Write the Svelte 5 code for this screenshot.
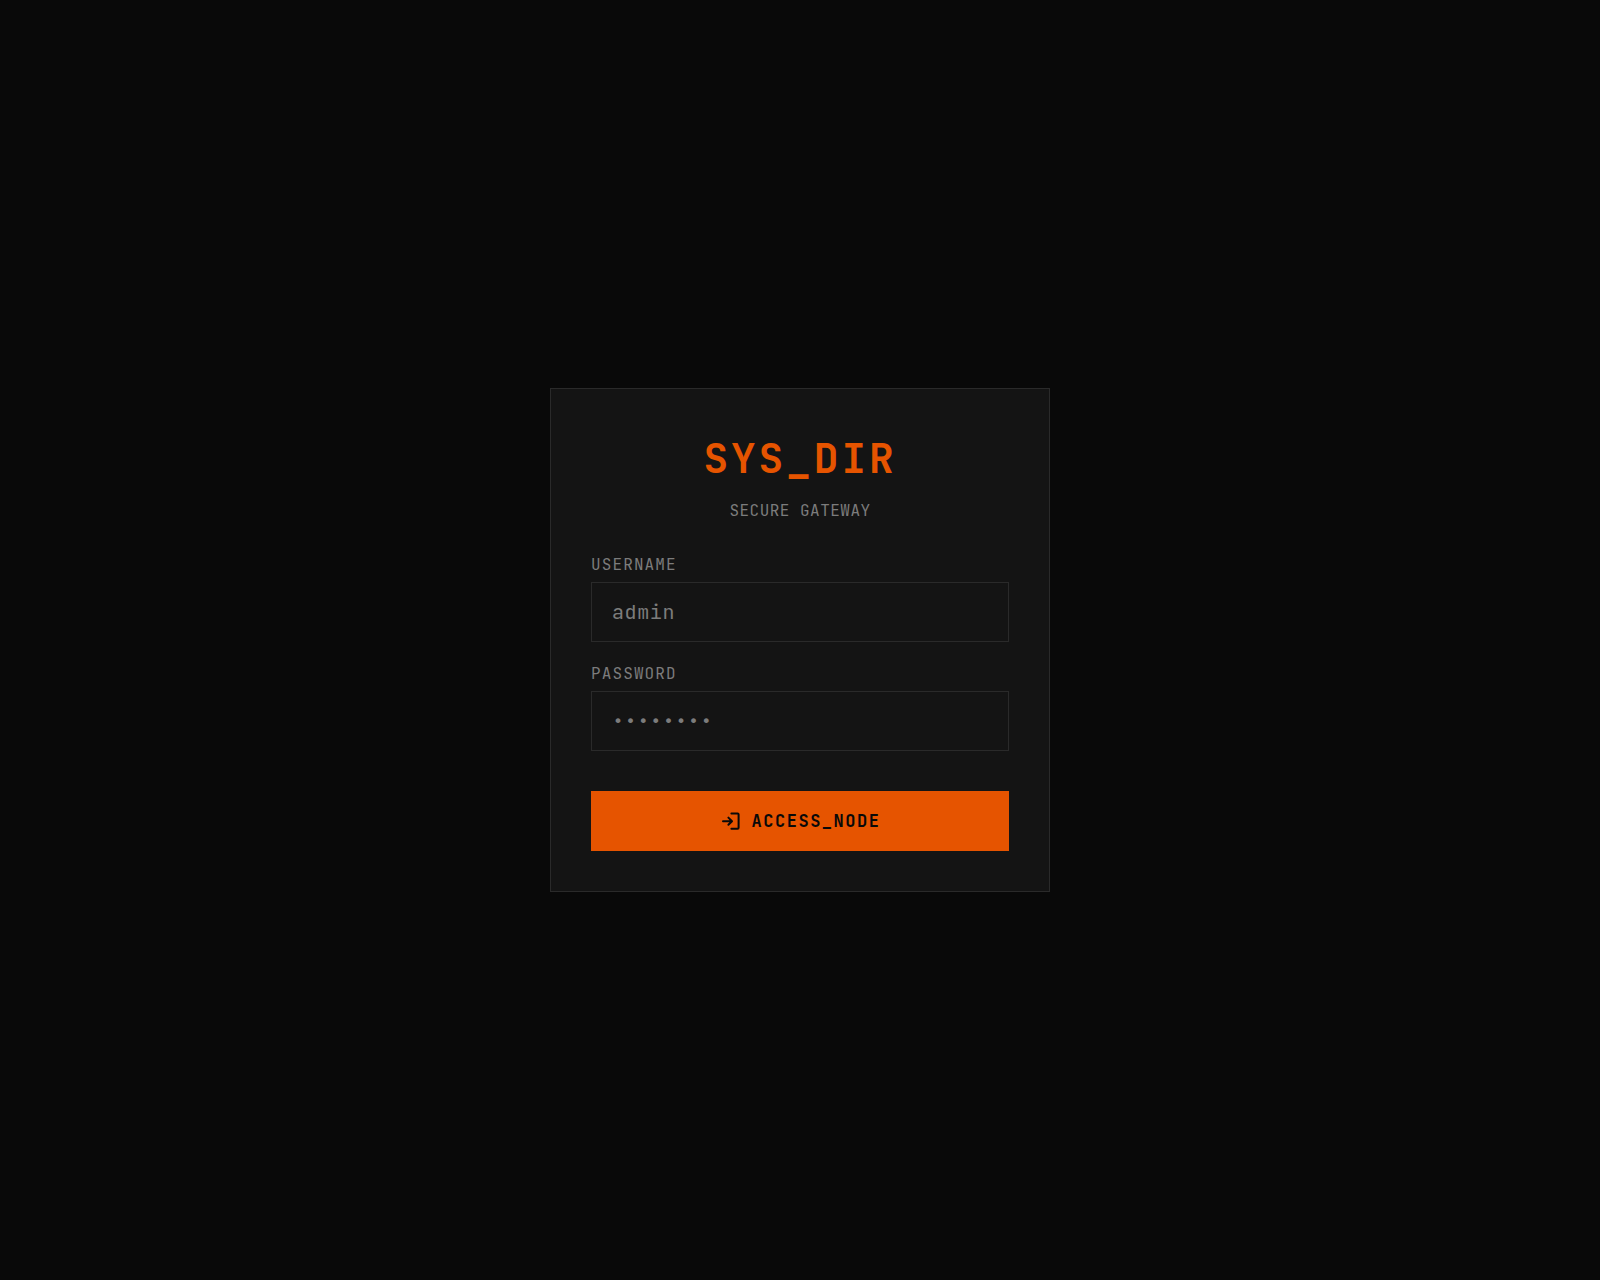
<script lang="ts">
  let username = $state('');
  let password = $state('');

  function handleSubmit(event: SubmitEvent) {
    event.preventDefault();
  }
</script>

<svelte:head>
  <title>SYS_DIR</title>
</svelte:head>

<main class="login-page">
  <section class="login-card">
    <header class="login-header">
      <h1 class="title">SYS_DIR</h1>
      <p class="subtitle">SECURE GATEWAY</p>
    </header>

    <form class="login-form" onsubmit={handleSubmit}>
      <div class="field">
        <label for="username">USERNAME</label>
        <input id="username" type="text" placeholder="admin" autocomplete="username" bind:value={username} />
      </div>

      <div class="field">
        <label for="password">PASSWORD</label>
        <input
          id="password"
          type="password"
          placeholder="••••••••"
          autocomplete="current-password"
          bind:value={password}
        />
      </div>

      <button type="submit" class="submit">
        <svg class="icon" viewBox="0 0 22 22" aria-hidden="true">
          <path d="M12.4 3.6h6.2a1 1 0 0 1 1 1v13.2a1 1 0 0 1-1 1h-6.2M4 11.2h8.6M9.4 7.6l3.6 3.6-3.6 3.6" />
        </svg>
        <span>ACCESS_NODE</span>
      </button>
    </form>
  </section>
</main>

<style>
  :global(body) {
    margin: 0;
    background: #090909;
  }

  .login-page {
    min-height: 100vh;
    display: flex;
    align-items: center;
    justify-content: center;
    font-family: 'JetBrains Mono', 'DejaVu Sans Mono', monospace;
    color: #7c7c7c;
  }

  .login-card {
    box-sizing: border-box;
    width: 100%;
    max-width: 500px;
    padding: 40px;
    background: #141414;
    border: 1px solid #2a2a2a;
  }

  .login-header {
    margin-bottom: 30px;
    text-align: center;
  }

  .title {
    margin: 0 0 12px;
    font-size: 41px;
    line-height: 58px;
    font-weight: 700;
    letter-spacing: 3px;
    color: #e65400;
  }

  .subtitle {
    margin: 0;
    font-size: 16px;
    line-height: 24px;
    letter-spacing: 0.03em;
  }

  .login-form {
    display: flex;
    flex-direction: column;
    gap: 20px;
  }

  .field {
    display: flex;
    flex-direction: column;
    gap: 5px;
  }

  label {
    font-size: 16px;
    line-height: 24px;
    letter-spacing: 0.07em;
  }

  input {
    box-sizing: border-box;
    width: 100%;
    height: 60px;
    padding: 0 20px;
    background: #141414;
    border: 1px solid #2a2a2a;
    border-radius: 0;
    outline: none;
    font-family: inherit;
    font-size: 20px;
    letter-spacing: 0.03em;
    color: #e0e0e0;
  }

  input::placeholder {
    color: #7c7c7c;
    opacity: 1;
  }

  input:focus {
    border-color: #e65400;
  }

  .submit {
    display: flex;
    align-items: center;
    justify-content: center;
    gap: 10px;
    height: 60px;
    margin-top: 20px;
    padding: 0 20px;
    background: #e65400;
    border: none;
    font-family: inherit;
    font-size: 17px;
    font-weight: 700;
    letter-spacing: 0.09em;
    color: #090909;
    cursor: pointer;
  }

  .submit:hover {
    background: #ff6a13;
  }

  .icon {
    width: 22px;
    height: 22px;
    fill: none;
    stroke: currentColor;
    stroke-width: 2;
    stroke-linecap: round;
    stroke-linejoin: round;
  }
</style>
